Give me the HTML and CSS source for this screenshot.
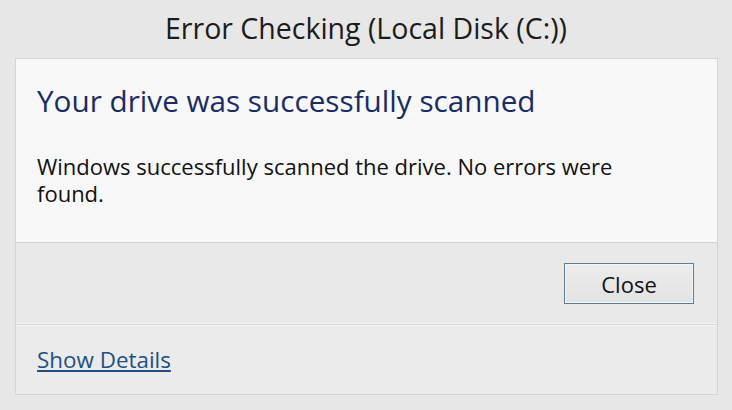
FILE: index.html
```html
<!DOCTYPE html>
<html>
<head>
<meta charset="utf-8">
<link rel="stylesheet" href="styles.css">
</head>
<body>
<div class="window">
  <div class="title">Error Checking (Local Disk (C:))</div>
  <div class="panel">
    <div class="content">
      <h1 class="heading">Your drive was successfully scanned</h1>
      <p class="message">Windows successfully scanned the drive. No errors were found.</p>
    </div>
    <div class="actions">
      <button class="btn">Close</button>
    </div>
    <div class="footer">
      <a class="link" href="#">Show Details</a>
    </div>
  </div>
</div>
</body>
</html>
```
FILE: styles.css
```css
html, body {
  margin: 0;
  padding: 0;
}
body {
  width: 732px;
  height: 410px;
  background: #e7e7e7;
  font-family: "Open Sans", "Noto Sans", sans-serif;
  overflow: hidden;
}
.window {
  display: flex;
  flex-direction: column;
  height: 410px;
}
.title {
  height: 58px;
  box-sizing: border-box;
  padding-top: 8px;
  text-align: center;
  font-size: 28.5px;
  line-height: 40px;
  color: #1c1c1c;
}
.panel {
  margin: 0 14px 0 15px;
  border: 1px solid #d4d4d4;
  display: flex;
  flex-direction: column;
}
.content {
  background: #f8f8f8;
  height: 184px;
  padding: 24px 21px 0 21px;
  box-sizing: border-box;
  border-bottom: 1px solid #d2d2d2;
}
.heading {
  margin: 0;
  font-weight: normal;
  font-size: 29.7px;
  color: #1a2c62;
  line-height: 36px;
}
.message {
  margin: 34px 0 0 0;
  max-width: 600px;
  font-size: 22px;
  color: #111;
  line-height: 27px;
}
.actions {
  height: 82px;
  box-sizing: border-box;
  display: flex;
  justify-content: flex-end;
  align-items: center;
  padding-right: 23px;
  background: #e9e9e9;
  border-bottom: 1px solid #d4d4d4;
  box-shadow: inset 0 -1px 0 #f4f4f4;
}
.btn {
  width: 130px;
  height: 41px;
  border: 1px solid #5e7d92;
  background: linear-gradient(#ececec, #e3e3e3);
  box-shadow: inset 0 0 0 1px #f3f5f6;
  font-family: inherit;
  font-size: 22px;
  color: #111;
  padding: 0;
}
.footer {
  height: 69px;
  background: #ebebeb;
  display: flex;
  align-items: center;
  padding-left: 21px;
  box-shadow: inset 0 1px 0 #f6f6f6;
}
.link {
  font-size: 22.4px;
  line-height: 30px;
  color: #1f4f80;
  text-decoration: underline;
}
```
